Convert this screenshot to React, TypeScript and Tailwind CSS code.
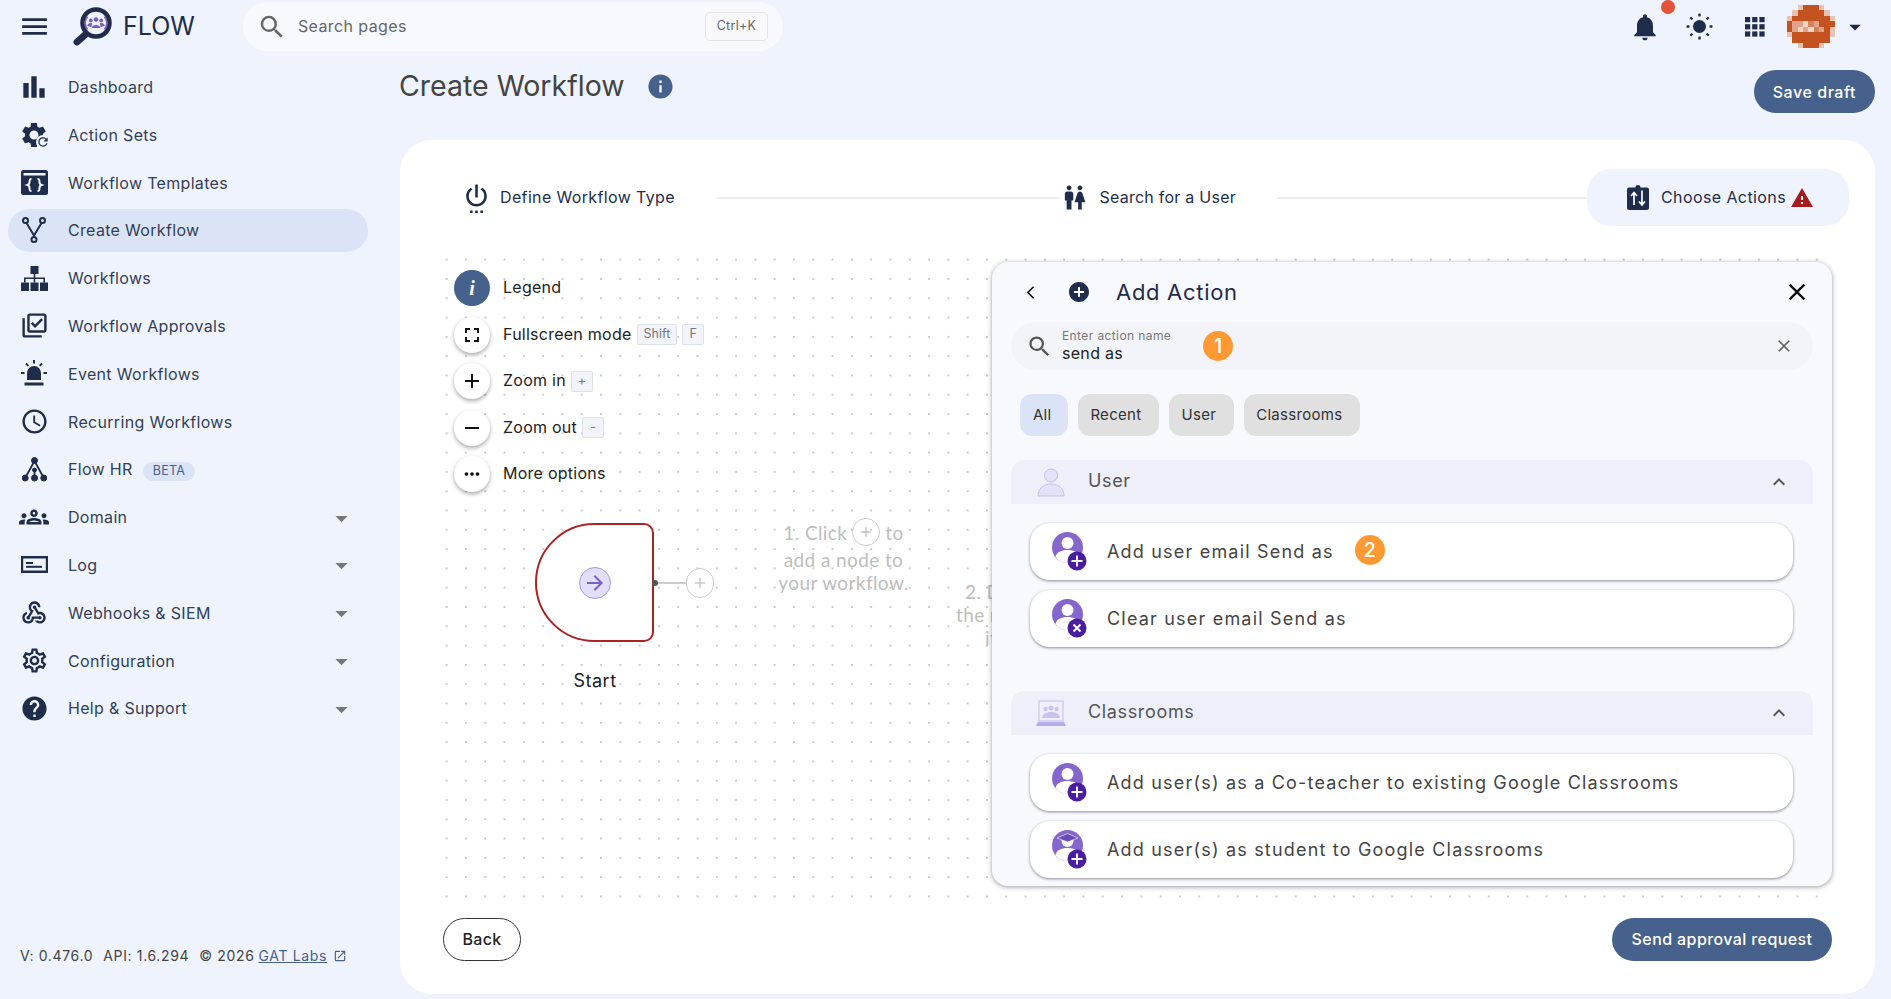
import React from "react";
import {
  MdMenu, MdSearch, MdNotifications, MdBarChart, MdOutlineLibraryAddCheck, MdAccessTime, MdOutlineGroups,
  MdOutlineWebhook, MdOutlineSettings, MdHelp, MdArrowDropDown, MdOpenInNew, MdInfo, MdSettingsPower, MdWc,
  MdWarning, MdFullscreen, MdAdd, MdRemove, MdMoreHoriz, MdArrowBackIosNew, MdAddCircle, MdClose,
  MdKeyboardArrowUp, MdSettings, MdRefresh, MdArrowForward,
} from "react-icons/md";

const DARK = "#1f2c4a";

function TemplatesIcon() {
  return (
    <svg width="27" height="25" viewBox="0 0 27 25">
      <rect x="0" y="0" width="27" height="25" rx="2.500" fill={DARK} />
      <rect x="2.500" y="3" width="22" height="2.500" fill="#eff3fe" />
      <path d="M10.500 9c-2 0-2 1-2 3s-.5 2.500-2 3c1.500.5 2 1 2 3s0 3 2 3M16.500 9c2 0 2 1 2 3s.5 2.500 2 3c-1.500.5-2 1-2 3s0 3-2 3" fill="none" stroke="#eff3fe" strokeWidth="2" />
    </svg>
  );
}
function ForkIcon() {
  return (
    <svg width="24" height="26" viewBox="0 0 24 26" fill="none" stroke={DARK} strokeWidth="2">
      <circle cx="3.500" cy="3.500" r="2.500" />
      <circle cx="20.500" cy="3.500" r="2.500" />
      <circle cx="12" cy="22.500" r="2.500" />
      <path d="M4.500 6L12 18.500V20M19.500 6L12 18.500" />
    </svg>
  );
}
function SitemapIcon() {
  return (
    <svg width="27" height="25" viewBox="0 0 27 25" fill={DARK}>
      <rect x="9.500" y="0" width="8" height="8" />
      <rect x="0" y="16.500" width="8" height="8.500" />
      <rect x="9.500" y="16.500" width="8" height="8.500" />
      <rect x="19" y="16.500" width="8" height="8.500" />
      <path d="M12.700 8h1.600v3.500H24v5h-1.600v-3.400H14.300v3.400h-1.600v-3.400H4.600v3.400H3v-5h9.700z" />
    </svg>
  );
}
function SirenIcon() {
  return (
    <svg width="26" height="27" viewBox="0 0 26 27" fill={DARK}>
      <path d="M6 20v-7a7 7 0 0 1 14 0v7z" />
      <rect x="3.500" y="22.500" width="19" height="3" rx=".5" />
      <rect x="12" y="0" width="2" height="3.500" />
      <rect x="0" y="12" width="3.500" height="2" />
      <rect x="22.500" y="12" width="3.500" height="2" />
      <path d="M4.200 4.200l1.500-1.400 2.300 2.400-1.400 1.400zM21.800 4.200l-1.500-1.400-2.300 2.400 1.400 1.400z" />
    </svg>
  );
}
function TreeIcon() {
  return (
    <svg width="25" height="25" viewBox="0 0 25 25" fill={DARK} stroke={DARK}>
      <circle cx="12.500" cy="3.500" r="3" />
      <circle cx="12.500" cy="21" r="3" />
      <circle cx="3.200" cy="21" r="3" />
      <circle cx="21.800" cy="21" r="3" />
      <circle cx="12.500" cy="13" r="2" />
      <path d="M12.500 4L3.200 21M12.500 4L21.800 21M12.500 13L12.500 21" fill="none" strokeWidth="1.800" />
    </svg>
  );
}
function LogIcon() {
  return (
    <svg width="27" height="17" viewBox="0 0 27 17" fill={DARK}>
      <path fillRule="evenodd" d="M0 0h27v17H0zM2.200 2.500v12h22.600v-12z" />
      <rect x="5" y="6" width="7" height="2" />
      <rect x="5" y="9.800" width="16" height="2" />
    </svg>
  );
}
function SunIcon() {
  const rays = [0, 45, 90, 135, 180, 225, 270, 315];
  return (
    <svg width="27" height="27" viewBox="0 0 27 27" fill={DARK}>
      <circle cx="13.500" cy="13.500" r="6.500" />
      {rays.map((a) => (
        <rect key={a} x="12.300" y="0.500" width="2.400" height="3" rx=".6" transform={`rotate(${a} 13.500 13.500)`} />
      ))}
    </svg>
  );
}
function GridIcon() {
  const cells = [0, 1, 2];
  return (
    <svg width="20" height="20" viewBox="0 0 20 20" fill={DARK}>
      {cells.map((r) => cells.map((c) => <rect key={`${r}${c}`} x={c * 7.2} y={r * 7.2} width="5.200" height="5.200" />))}
    </svg>
  );
}
function Avatar() {
  const map = [
    "..lOOOl..",
    ".lOOOOOl.",
    "lOOOOOOOl",
    "OppwmpOOO",
    "OpwpwmpOl",
    "lOOOOOOOl",
    ".OOOOOOO.",
    "..lOOOl..",
  ];
  const colors: Record<string, string> = { O: "#c4521f", l: "#e8c3b4", p: "#e2a388", m: "#d6825c", w: "#f0d4c4" };
  return (
    <svg width="48" height="43" viewBox="0 0 9 8" preserveAspectRatio="none" shapeRendering="crispEdges">
      {map.map((row, y) =>
        row.split("").map((ch, x) => (ch === "." ? null : <rect key={`${x}-${y}`} x={x} y={y} width="1.02" height="1.02" fill={colors[ch]} />)),
      )}
    </svg>
  );
}
function Logo() {
  return (
    <svg width="42" height="40" viewBox="0 0 42 40" fill="none">
      <path d="M5 35L14 27" stroke={DARK} strokeWidth="7" strokeLinecap="round" />
      <circle cx="24" cy="16" r="13.500" fill="#eff3fe" stroke={DARK} strokeWidth="4.500" />
      <circle cx="24" cy="12.500" r="2.300" fill="#7b5fc0" />
      <circle cx="18.800" cy="13.500" r="1.900" fill="#7b5fc0" />
      <circle cx="29.200" cy="13.500" r="1.900" fill="#7b5fc0" />
      <path d="M19.500 21c0-4 9-4 9 0zM15.300 19c0-3 4-3.500 5-2.500l-1 3.500zM32.700 19c0-3-4-3.500-5-2.500l1 3.500z" fill="#7b5fc0" />
      <path d="M15.500 9.500a10 10 0 0 0 0 13M32.500 9.500a10 10 0 0 1 0 13" stroke="#7b5fc0" strokeWidth="1.800" />
    </svg>
  );
}
function ChooseIcon() {
  return (
    <svg width="22" height="25" viewBox="0 0 22 25">
      <path d="M2 2.500h6.500a2.500 2.500 0 0 1 5 0H20a2 2 0 0 1 2 2V23a2 2 0 0 1-2 2H2a2 2 0 0 1-2-2V4.500a2 2 0 0 1 2-2z" fill={DARK} />
      <path d="M7 20V8M4 11l3-3.500L10 11M15 5.500v14M12 16.500l3 3.500 3-3.500" fill="none" stroke="#fff" strokeWidth="1.700" />
    </svg>
  );
}
function PersonOutline() {
  return (
    <svg width="28" height="29" viewBox="0 0 28 29" fill="#e4e2f7" stroke="#c3bdec" strokeWidth="1">
      <circle cx="14" cy="7.500" r="6.500" />
      <path d="M1 28c0-7 5-12 13-12s13 5 13 12z" />
    </svg>
  );
}
function ClassroomIcon() {
  return (
    <svg width="30" height="27" viewBox="0 0 30 27">
      <rect x="3" y="1" width="24" height="20" fill="#f0eefb" stroke="#c3bdec" />
      <circle cx="15" cy="8" r="2.500" fill="#c9c3ee" />
      <circle cx="9.500" cy="9" r="2.200" fill="#c9c3ee" />
      <circle cx="20.500" cy="9" r="2.200" fill="#c9c3ee" />
      <path d="M6 18c0-8 18-8 18 0z" fill="#c9c3ee" />
      <path d="M0 26l2-4h26l2 4z" fill="#b3acea" />
    </svg>
  );
}
function ActionIcon({ kind, cap }: { kind: "plus" | "x"; cap?: boolean }) {
  return (
    <svg width="36" height="39" viewBox="0 0 36 39">
      <circle cx="15.500" cy="15.500" r="15.500" fill="#8566cc" />
      <circle cx="15.500" cy="11" r="6" fill="#fff" />
      <path d="M3.500 25c1-5 6-7 12-7s11 2 12 7c-3 4-7 6-12 6s-9-2-12-6z" fill="#fff" />
      {cap && <path d="M5 8l10.500-4.500L26 8l-10.500 4z" fill="#6b4bb8" stroke="#fff" strokeWidth=".6" />}
      <circle cx="25" cy="29" r="9.500" fill="#4a1f9f" />
      {kind === "plus" ? (
        <path d="M25 23.500v11M19.500 29h11" stroke="#fff" strokeWidth="1.800" />
      ) : (
        <path d="M21.500 25.500l7 7M28.500 25.500l-7 7" stroke="#fff" strokeWidth="2" />
      )}
    </svg>
  );
}
function ActionSetsIcon() {
  return (
    <span className="relative flex h-[30px] w-[30px]">
      <MdSettings size={30} color={DARK} />
      <span className="absolute right-[-1px] bottom-[1px] flex h-[14px] w-[14px] items-center justify-center rounded-full bg-[#eff3fe]">
        <MdRefresh size={14} color={DARK} />
      </span>
    </span>
  );
}

const nav: { label: string; icon: React.ReactNode; active?: boolean; beta?: boolean; caret?: boolean }[] = [
  { label: "Dashboard", icon: <MdBarChart size={38} color={DARK} /> },
  { label: "Action Sets", icon: <ActionSetsIcon /> },
  { label: "Workflow Templates", icon: <TemplatesIcon /> },
  { label: "Create Workflow", icon: <ForkIcon />, active: true },
  { label: "Workflows", icon: <SitemapIcon /> },
  { label: "Workflow Approvals", icon: <MdOutlineLibraryAddCheck size={29} color={DARK} /> },
  { label: "Event Workflows", icon: <SirenIcon /> },
  { label: "Recurring Workflows", icon: <MdAccessTime size={29} color={DARK} /> },
  { label: "Flow HR", icon: <TreeIcon />, beta: true },
  { label: "Domain", icon: <MdOutlineGroups size={30} color={DARK} />, caret: true },
  { label: "Log", icon: <LogIcon />, caret: true },
  { label: "Webhooks & SIEM", icon: <MdOutlineWebhook size={28} color={DARK} />, caret: true },
  { label: "Configuration", icon: <MdOutlineSettings size={29} color={DARK} />, caret: true },
  { label: "Help & Support", icon: <MdHelp size={29} color={DARK} />, caret: true },
];

function Kbd({ children }: { children: React.ReactNode }) {
  return (
    <span className="flex h-[21px] min-w-[22px] items-center justify-center rounded-[2px] border border-[#dde1ec] bg-[#f2f4fa] px-[6px] text-[12.500px] text-[#777]">
      {children}
    </span>
  );
}
function CanvasControl({ icon, label, keys, primary }: { icon: React.ReactNode; label: string; keys?: string[]; primary?: boolean }) {
  return (
    <div className="flex h-[36px] items-center">
      <span
        className={
          primary
            ? "flex h-[36px] w-[36px] items-center justify-center rounded-full bg-[#46618b]"
            : "flex h-[36px] w-[36px] items-center justify-center rounded-full bg-white text-[#111] shadow-[0_2px_4px_rgba(0,0,0,0.35)]"
        }
      >
        {icon}
      </span>
      <span className="mb-[2px] ml-[13px] text-[16px] leading-none tracking-[0.25px] text-[#222]">{label}</span>
      {keys && (
        <span className="ml-[5px] flex gap-[5px]">
          {keys.map((k) => (
            <Kbd key={k}>{k}</Kbd>
          ))}
        </span>
      )}
    </div>
  );
}
function Chip({ label, active }: { label: string; active?: boolean }) {
  return (
    <span
      className={
        active
          ? "flex h-[42px] items-center rounded-[12px] bg-[#dbe4f7] pl-[13px] pr-[17px] text-[15px] tracking-[0.25px] text-[#333]"
          : "flex h-[42px] items-center rounded-[12px] bg-[#e0e0e0] pl-[12px] pr-[18px] text-[15px] tracking-[0.3px] text-[#333]"
      }
    >
      {label}
    </span>
  );
}
function OrangeBadge({ n, className }: { n: number; className: string }) {
  return (
    <span className={`flex h-[30px] w-[30px] items-center justify-center rounded-full bg-[#ff9933] text-[20px] font-medium text-white ${className}`}>{n}</span>
  );
}
function SectionHeader({ icon, label }: { icon: React.ReactNode; label: string }) {
  return (
    <div className="mx-[19px] flex h-[44px] shrink-0 items-center rounded-t-[14px] bg-[#eeeff9] pr-[22px]">
      <span className="ml-[25px] flex w-[30px] justify-center">{icon}</span>
      <span className="mb-[3px] ml-[22px] text-[18px] tracking-[0.65px] text-[#555]">{label}</span>
      <MdKeyboardArrowUp size={24} className="ml-auto text-[#555]" />
    </div>
  );
}
function ActionRow({ icon, label, badge, className }: { icon: React.ReactNode; label: string; badge?: number; className?: string }) {
  return (
    <div className={`ml-[38px] mr-[39px] flex h-[57px] shrink-0 items-center rounded-[20px] bg-white pl-[22px] shadow-[0_1px_3px_rgba(0,0,0,0.45)] ${className ?? ""}`}>
      <span className="flex w-[36px]">{icon}</span>
      <span className="ml-[19px] text-[18px] tracking-[1.19px] text-[#444]">{label}</span>
      {badge && <OrangeBadge n={badge} className="mb-[4px] ml-[21px]" />}
    </div>
  );
}

export default function App() {
  return (
    <div className="flex h-[999px] w-[1891px] flex-col overflow-hidden bg-[#eff3fe] font-['Inter',sans-serif]">
      <header className="flex h-[53px] shrink-0 items-center">
        <MdMenu size={33} color={DARK} className="ml-[18px]" />
        <span className="ml-[21px] flex">
          <Logo />
        </span>
        <span className="ml-[9px] text-[25px] tracking-[0px] text-[#1f2c4a]">FLOW</span>
        <div className="ml-[48px] flex h-[49px] w-[540px] items-center rounded-full bg-[#f7f9ff] pl-[14px]">
          <MdSearch size={30} className="text-[#666]" />
          <span className="mb-[2px] ml-[11px] text-[16px] tracking-[0.4px] text-[#666]">Search pages</span>
          <span className="ml-auto mr-[15px] flex h-[29px] w-[63px] items-center justify-center rounded-[5px] border border-[#e4e4e8] bg-[#f8f8fa] text-[12.500px] tracking-[0.3px] text-[#666]">Ctrl+K</span>
        </div>
        <div className="ml-auto flex items-center">
          <span className="relative flex">
            <MdNotifications size={32} color={DARK} />
            <span className="absolute right-[-14px] top-[-11px] h-[14px] w-[14px] rounded-full bg-[#e25339]" />
          </span>
          <span className="ml-[25px] flex">
            <SunIcon />
          </span>
          <span className="ml-[32px] flex">
            <GridIcon />
          </span>
          <span className="ml-[22px] flex">
            <Avatar />
          </span>
          <MdArrowDropDown size={28} color={DARK} className="ml-[6px] mr-[22px]" />
        </div>
      </header>

      <div className="flex min-h-0 flex-1">
        <aside className="relative w-[400px] shrink-0">
          <nav className="flex w-[368px] flex-col gap-[4.800px] pl-[8px] pt-[12.500px]">
            {nav.map((item) => (
              <div
                key={item.label}
                className={
                  item.active
                    ? "flex h-[43px] items-center rounded-full bg-[#dbe4f7] pl-[10px] pr-[12px]"
                    : "flex h-[43px] items-center rounded-full pl-[10px] pr-[12px]"
                }
              >
                <span className="flex w-[32px] justify-center">{item.icon}</span>
                <span className="ml-[18px] text-[16px] leading-none tracking-[0.32px] text-[#333f56]">{item.label}</span>
                {item.beta && (
                  <span className="ml-[10px] mt-[4px] rounded-full bg-[#dbe4f7] px-[10px] py-[3px] text-[12.500px] leading-none tracking-[0.3px] text-[#46618b]">BETA</span>
                )}
                {item.caret && <MdArrowDropDown size={29} className="ml-auto mt-[2px] text-[#777]" />}
              </div>
            ))}
          </nav>
          <div className="absolute bottom-[33px] left-[20px] flex items-center whitespace-nowrap text-[14px] tracking-[0.65px] text-[#444]">
            <span>V: 0.476.0</span>
            <span className="ml-[10px]">API: 1.6.294</span>
            <span className="ml-[10px]">© 2026</span>
            <span className="ml-[4px] text-[#46618b] underline">GAT Labs</span>
            <MdOpenInNew size={14} className="ml-[6px] text-[#46618b]" />
          </div>
        </aside>

        <main className="flex min-w-0 flex-1 flex-col pr-[16px]">
          <div className="flex h-[87px] shrink-0 items-start">
            <h1 className="ml-[-1px] mt-[14px] text-[28.500px] font-normal leading-[38px] text-[#444]">Create Workflow</h1>
            <MdInfo size={29} color="#46618b" className="ml-[21px] mt-[19px]" />
            <button className="ml-auto mt-[17px] h-[43px] rounded-full bg-[#46618b] px-[19px] text-[16px] font-medium tracking-[0.55px] text-white">Save draft</button>
          </div>

          <section className="flex h-[854px] shrink-0 flex-col rounded-[32px] bg-white">
            <div className="mt-[29px] flex h-[57px] shrink-0 items-center pl-[61px] pr-[26px]">
              <MdSettingsPower size={31} color={DARK} />
              <span className="mb-[2px] ml-[8px] text-[16px] tracking-[0.36px] text-[#1f2c4a]">Define Workflow Type</span>
              <span className="ml-[41px] h-[2px] flex-1 bg-[#eeeeee]" />
              <MdWc size={29} color={DARK} />
              <span className="mb-[2px] ml-[10px] text-[16px] tracking-[0.25px] text-[#1f2c4a]">Search for a User</span>
              <span className="ml-[41px] h-[2px] w-[310px] bg-[#eeeeee]" />
              <div className="flex h-[57px] w-[262px] items-center rounded-[24px] bg-[#eff3fe] pl-[40px]">
                <ChooseIcon />
                <span className="mb-[2px] ml-[12px] text-[16px] tracking-[0.4px] text-[#1f2c4a]">Choose Actions</span>
                <MdWarning size={24} color="#a51c1c" className="ml-[4px]" />
              </div>
            </div>

            <div className="relative ml-[45px] mr-[43px] mt-[32px] h-[642px] shrink-0 bg-[radial-gradient(#c8c8c8_0.8px,transparent_1px)] bg-[size:19.300px_19.300px] bg-[position:-8px_-8px]">
              <div className="flex flex-col gap-[10.500px] pl-[9px] pt-[12px]">
                <CanvasControl primary label="Legend" icon={<span className="font-['Liberation_Serif',serif] text-[20px] font-bold italic leading-none text-white">i</span>} />
                <CanvasControl label="Fullscreen mode" keys={["Shift", "F"]} icon={<MdFullscreen size={24} />} />
                <CanvasControl label="Zoom in" keys={["+"]} icon={<MdAdd size={24} />} />
                <CanvasControl label="Zoom out" keys={["-"]} icon={<MdRemove size={24} />} />
                <CanvasControl label="More options" icon={<MdMoreHoriz size={22} />} />
              </div>

              <div className="absolute left-[90px] top-[265px] flex h-[119px] w-[119px] items-center justify-center rounded-l-[60px] rounded-r-[10px] border-2 border-[#a92424] bg-white">
                <span className="flex h-[32px] w-[32px] items-center justify-center rounded-full border border-[#a69ae0] bg-[#e3dffa]">
                  <MdArrowForward size={24} color="#7a5fc9" />
                </span>
              </div>
              <span className="absolute left-[210px] top-[324px] h-[2px] w-[32px] bg-[#ccc]" />
              <span className="absolute left-[207px] top-[322px] h-[6px] w-[6px] rounded-full bg-[#555]" />
              <span className="absolute left-[241px] top-[310px] flex h-[30px] w-[28px] items-center justify-center rounded-full border border-[#ccc] bg-white text-[#ccc]">
                <MdAdd size={18} />
              </span>
              <span className="absolute left-[119px] top-[412px] w-[62px] text-center text-[18px] leading-[22px] tracking-[0.5px] text-[#222]">Start</span>

              <div className="absolute left-[333px] top-[260px] w-[131px] text-center font-['Lato',sans-serif] text-[19px] leading-[23px] tracking-[0.4px] text-[#bdbdbd]">
                <div className="flex items-center justify-center">
                  1. Click
                  <span className="mx-[5px] inline-flex h-[28px] w-[28px] items-center justify-center rounded-full border border-[#ccc]">
                    <MdAdd size={16} />
                  </span>
                  to
                </div>
                <div className="mt-[2px]">add a node to</div>
                <div>your workflow.</div>
              </div>
              <div className="absolute left-[520px] top-[322px] whitespace-nowrap font-['Lato',sans-serif] text-[19px] leading-[23px] tracking-[0.4px] text-[#bdbdbd]">
                <div>2. Drag</div>
                <div className="ml-[-9px]">the node</div>
                <div className="ml-[20px]">it</div>
              </div>

              <div className="absolute right-0 top-[4px] flex h-[624px] w-[840px] flex-col overflow-hidden rounded-[16px] bg-[#f8f9ff] shadow-[0_1px_5px_rgba(0,0,0,0.4)]">
                <div className="flex h-[60px] shrink-0 items-center pl-[31px] pr-[21px]">
                  <MdArrowBackIosNew size={15} className="text-[#111]" />
                  <MdAddCircle size={24} color={DARK} className="ml-[29px]" />
                  <span className="ml-[25px] text-[22px] tracking-[0.7px] text-[#1f2c4a]">Add Action</span>
                  <MdClose size={28} className="ml-auto text-[#111]" />
                </div>
                <div className="mx-[19px] flex h-[48px] shrink-0 items-center rounded-full bg-[#f3f4fa] pl-[15px] pr-[19px]">
                  <MdSearch size={27} className="text-[#555]" />
                  <div className="ml-[9px] flex flex-col">
                    <span className="text-[12px] leading-[14px] tracking-[0.4px] text-[#777]">Enter action name</span>
                    <span className="text-[16px] leading-[20px] tracking-[0.3px] text-[#222]">send as</span>
                  </div>
                  <OrangeBadge n={1} className="ml-[32px]" />
                  <MdClose size={20} className="ml-auto text-[#666]" />
                </div>
                <div className="ml-[28px] mt-[24px] flex shrink-0 gap-[10px]">
                  <Chip active label="All" />
                  <Chip label="Recent" />
                  <Chip label="User" />
                  <Chip label="Classrooms" />
                </div>
                <div className="mt-[24px]">
                  <SectionHeader icon={<PersonOutline />} label="User" />
                </div>
                <div className="mt-[19px] flex flex-col gap-[10px]">
                  <ActionRow icon={<ActionIcon kind="plus" />} label="Add user email Send as" badge={2} />
                  <ActionRow icon={<ActionIcon kind="x" />} label="Clear user email Send as" />
                </div>
                <div className="mt-[44px]">
                  <SectionHeader icon={<ClassroomIcon />} label="Classrooms" />
                </div>
                <div className="mt-[19px] flex flex-col gap-[10px]">
                  <ActionRow icon={<ActionIcon kind="plus" />} label="Add user(s) as a Co-teacher to existing Google Classrooms" />
                  <ActionRow icon={<ActionIcon kind="plus" cap />} label="Add user(s) as student to Google Classrooms" />
                </div>
              </div>
            </div>

            <div className="ml-[43px] mr-[43px] mt-[18px] flex items-center justify-between">
              <button className="h-[43px] w-[78px] rounded-full border border-[#333] bg-white pb-[2px] text-[16px] font-medium tracking-[0.25px] text-[#222]">Back</button>
              <button className="h-[43px] w-[220px] rounded-full bg-[#46618b] pb-[2px] text-[16px] font-medium tracking-[0.4px] text-white">Send approval request</button>
            </div>
          </section>
        </main>
      </div>
    </div>
  );
}
